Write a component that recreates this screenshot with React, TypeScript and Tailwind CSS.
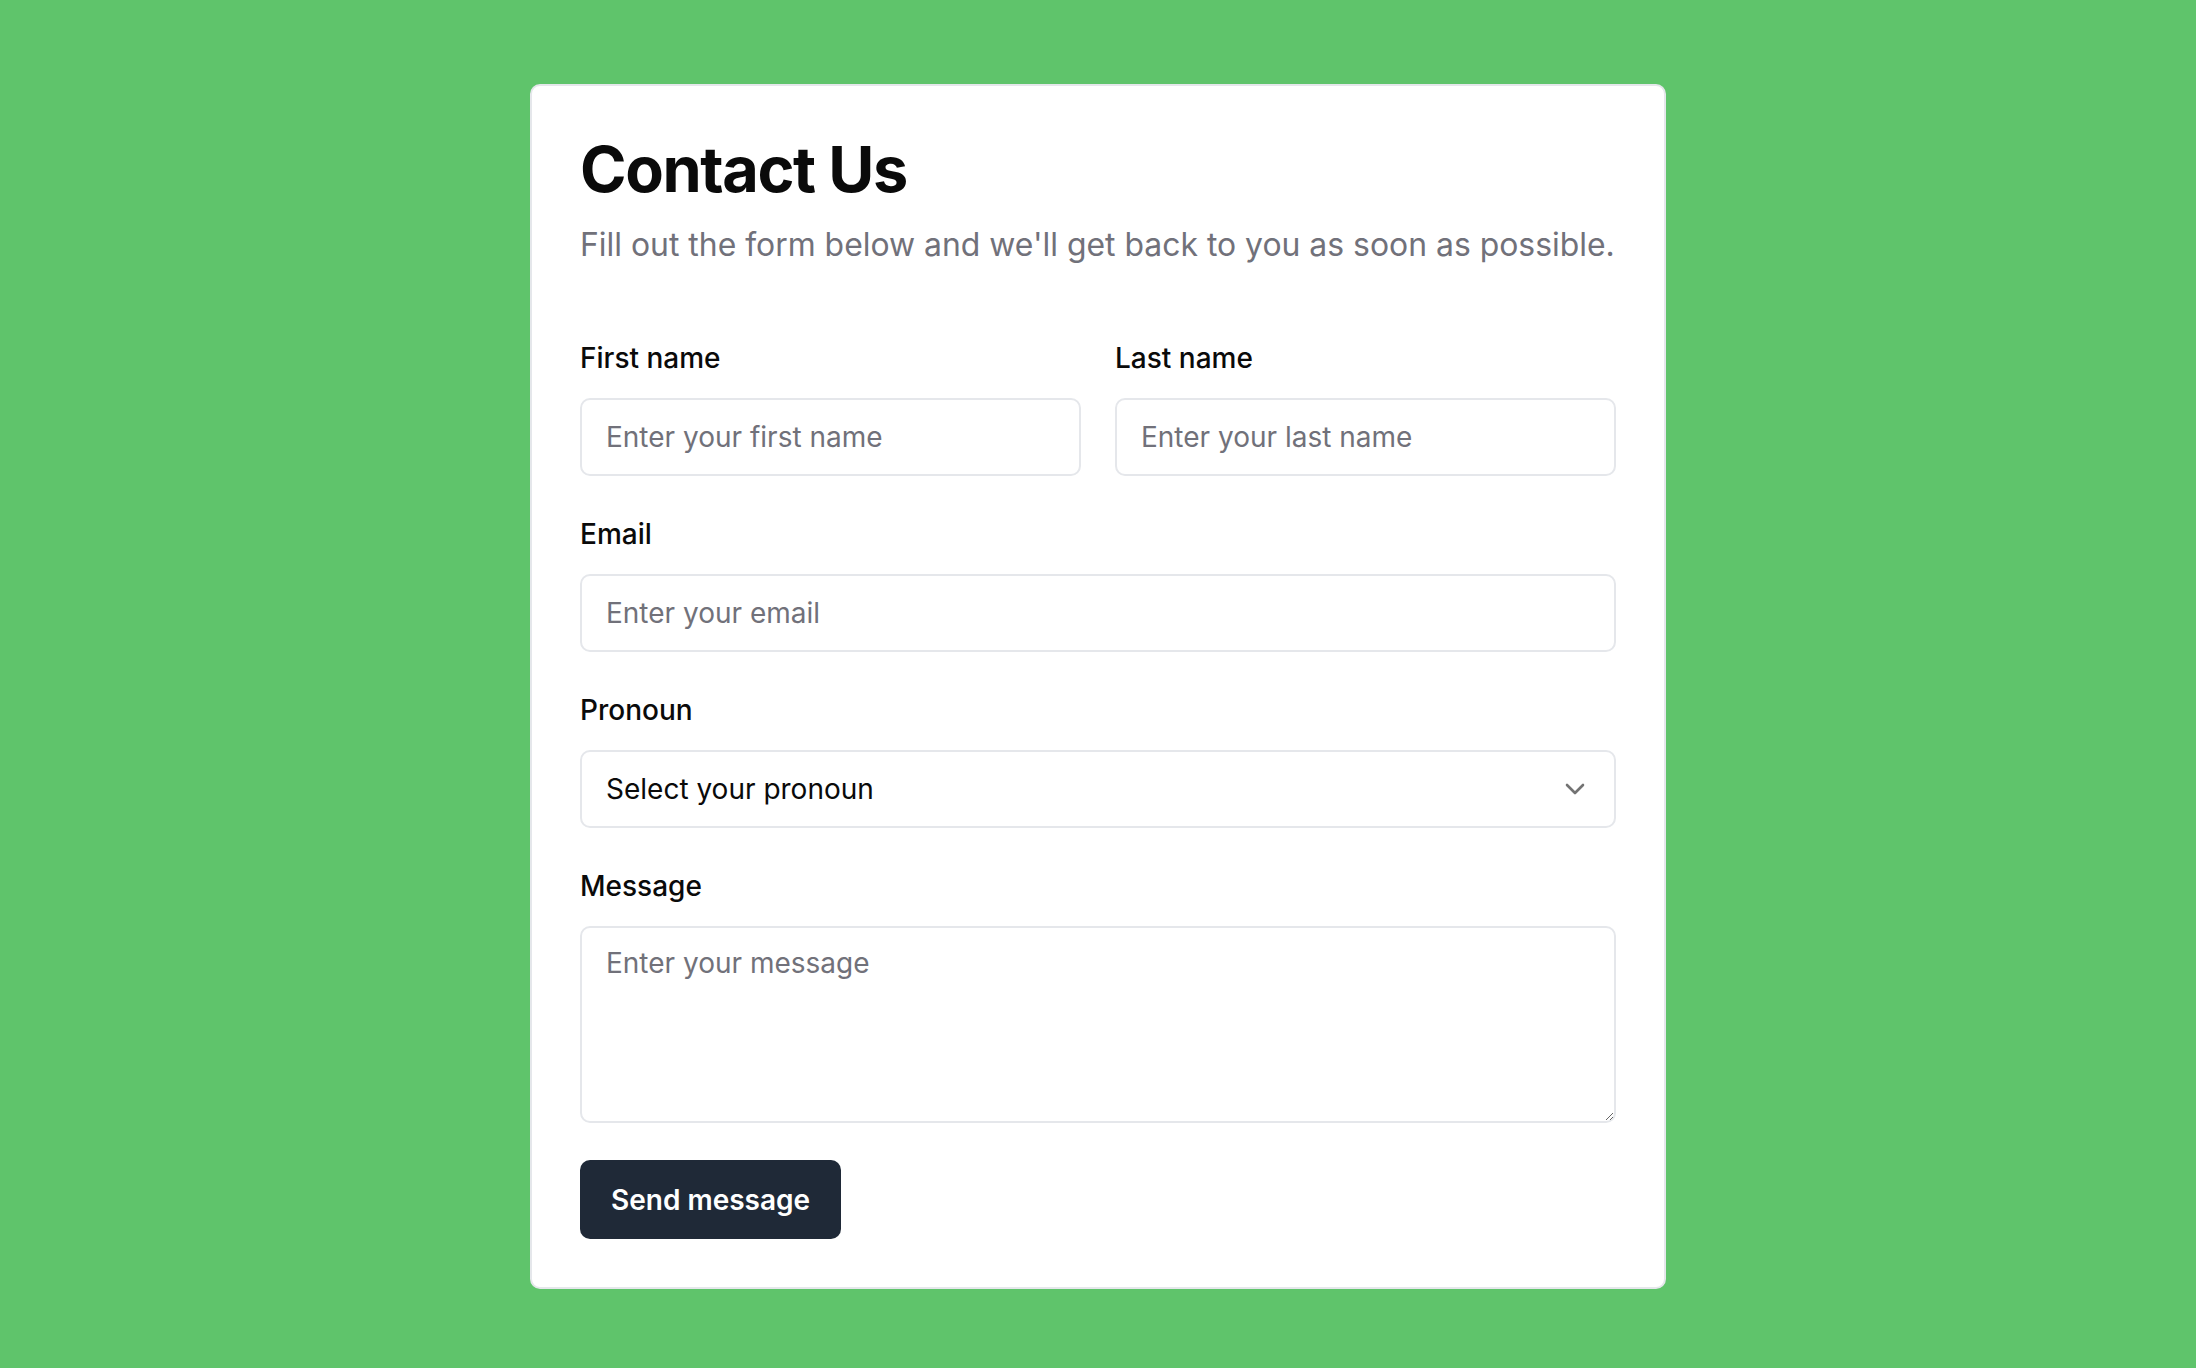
import { useState } from 'react'

const inputCls =
  'h-[78px] w-full rounded-[10px] border-2 border-[#e5e7eb] bg-white px-[24px] text-[28px] text-[#0a0a0a] placeholder:text-[#71717a] outline-none'

function Field({ label, children }: { label: string; children: React.ReactNode }) {
  return (
    <div className="flex flex-col gap-[19px]">
      <label className="text-[28px] font-medium leading-[42px] text-[#0a0a0a]">{label}</label>
      {children}
    </div>
  )
}

export default function App() {
  const [pronoun, setPronoun] = useState('')

  return (
    <div
      className="min-h-screen bg-[#5fc46b] pt-[84px] pb-[81px]"
      style={{ fontFamily: 'Inter, "Noto Sans", sans-serif' }}
    >
      <div className="mx-auto w-[1136px] rounded-[10px] border-2 border-[#e5e7eb] bg-white p-[48px]">
        <h1 className="text-[63px] font-bold leading-[70px] tracking-[-1.4px] text-[#0a0a0a]">Contact Us</h1>
        <p className="mt-[16px] whitespace-nowrap text-[31.9px] leading-[49px] text-[#71717a]">
          Fill out the form below and we&apos;ll get back to you as soon as possible.
        </p>

        <form className="mt-[68px] flex flex-col gap-[37px]" onSubmit={(e) => e.preventDefault()}>
          <div className="grid grid-cols-2 gap-[34px]">
            <Field label="First name">
              <input className={inputCls} placeholder="Enter your first name" />
            </Field>
            <Field label="Last name">
              <input className={inputCls} placeholder="Enter your last name" />
            </Field>
          </div>

          <Field label="Email">
            <input type="email" className={inputCls} placeholder="Enter your email" />
          </Field>

          <Field label="Pronoun">
            <div className="relative">
              <select
                value={pronoun}
                onChange={(e) => setPronoun(e.target.value)}
                className={`${inputCls} appearance-none pr-[70px]`}
              >
                <option value="">Select your pronoun</option>
                <option value="he">He/Him</option>
                <option value="she">She/Her</option>
                <option value="they">They/Them</option>
              </select>
              <svg
                className="pointer-events-none absolute right-[31px] top-1/2 -translate-y-1/2"
                width="20"
                height="12"
                viewBox="0 0 20 12"
                fill="none"
                stroke="#737373"
                strokeWidth="2.6"
                strokeLinecap="round"
                strokeLinejoin="round"
              >
                <polyline points="2,2 10,10 18,2" />
              </svg>
            </div>
          </Field>

          <Field label="Message">
            <textarea
              className="h-[197px] w-full rounded-[10px] border-2 border-[#e5e7eb] bg-white px-[24px] py-[14px] text-[28px] leading-[42px] text-[#0a0a0a] placeholder:text-[#71717a] outline-none"
              placeholder="Enter your message"
            />
          </Field>

          <div>
            <button
              type="submit"
              className="h-[79px] rounded-[10px] bg-[#1f2937] px-[31px] text-[28px] font-semibold text-white"
            >
              Send message
            </button>
          </div>
        </form>
      </div>
    </div>
  )
}
